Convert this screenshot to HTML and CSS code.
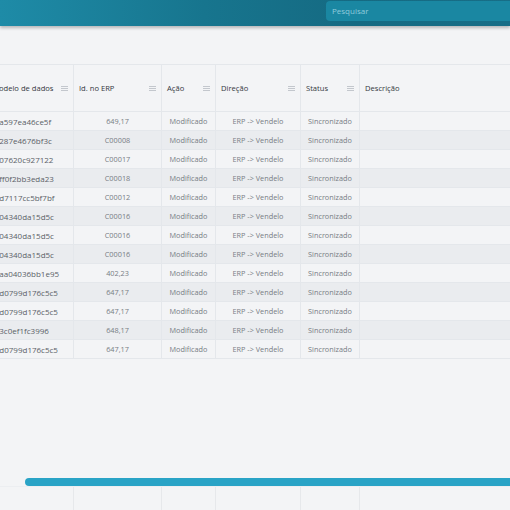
FILE: index.html
```html
<!DOCTYPE html>
<html lang="pt">
<head>
  <meta charset="UTF-8" />
  <title>Sincronizações</title>
  <link rel="stylesheet" href="styles.css">
</head>
<body>

  <header class="topbar">
    <div class="search">Pesquisar</div>
  </header>

  <div class="grid-wrap">
    <div class="grid">
      <div class="row head">
        <div class="cell c1">Id. do modelo de dados <span class="menu"></span></div>
        <div class="cell c2">Id. no ERP <span class="menu"></span></div>
        <div class="cell c3">Ação <span class="menu"></span></div>
        <div class="cell c4">Direção <span class="menu"></span></div>
        <div class="cell c5">Status <span class="menu"></span></div>
        <div class="cell c6">Descrição</div>
      </div>
      <div id="rows"></div>
      <div class="spacer"></div>
      <div class="hscroll"><div class="thumb"></div></div>
      <div class="row foot">
        <div class="cell c1"></div><div class="cell c2"></div><div class="cell c3"></div>
        <div class="cell c4"></div><div class="cell c5"></div><div class="cell c6"></div>
      </div>
    </div>
  </div>

  <script>
    const data = [
      ['64f1b2c5a597ea46ce5f', '649,17'],
      ['64f1b2c5287e4676bf3c', 'C00008'],
      ['64f1b2c507620c927122', 'C00017'],
      ['64f1b2c5ff0f2bb3eda23', 'C00018'],
      ['64f1b2c5d7117cc5bf7bf', 'C00012'],
      ['64f1b2c504340da15d5c', 'C00016'],
      ['64f1b2c504340da15d5c', 'C00016'],
      ['64f1b2c504340da15d5c', 'C00016'],
      ['64f1b2c5aa04036bb1e95', '402,23'],
      ['64f1b2c5d0799d176c5c5', '647,17'],
      ['64f1b2c5d0799d176c5c5', '647,17'],
      ['64f1b2c53c0ef1fc3996', '648,17'],
      ['64f1b2c5d0799d176c5c5', '647,17']
    ];

    const rows = document.getElementById('rows');
    data.forEach(item => {
      const row = document.createElement('div');
      row.className = 'row';
      row.innerHTML = `
        <div class="cell c1 left">${item[0]}</div>
        <div class="cell c2">${item[1]}</div>
        <div class="cell c3">Modificado</div>
        <div class="cell c4">ERP -&gt; Vendelo</div>
        <div class="cell c5">Sincronizado</div>
        <div class="cell c6"></div>
      `;
      rows.appendChild(row);
    });
  </script>
</body>
</html>
```
FILE: styles.css
```css
body {
  margin: 0;
  font-family: 'Open Sans', 'DejaVu Sans', sans-serif;
  background: #f3f4f6;
  height: 510px;
  overflow: hidden;
}

.topbar {
  height: 26px;
  background: linear-gradient(90deg, #1e8ba7 0%, #17758e 40%, #156a82 70%, #176e87 100%);
  box-shadow: 0 2px 3px rgba(0, 0, 0, 0.25);
  display: flex;
  justify-content: flex-end;
  align-items: center;
}

.search {
  width: 178px;
  height: 20px;
  margin-top: -4px;
  background: #1a87a2;
  border-radius: 4px 0 0 4px;
  color: #8fcbdc;
  font-size: 8px;
  line-height: 20px;
  padding-left: 6px;
}

.grid-wrap {
  margin-top: 38px;
  overflow: hidden;
}

/* the grid is scrolled a bit to the right, so the first column is cut */
.grid {
  margin-left: -43px;
  width: 660px;
}

.row {
  display: flex;
  height: 19px;
  border-bottom: 1px solid #e4e7eb;
  box-sizing: border-box;
}

#rows .row:nth-child(even) {
  background: #eaecef;
}

.row.head {
  height: 48px;
  border-top: 1px solid #e4e7eb;
}

.cell {
  box-sizing: border-box;
  border-right: 1px solid #e4e7eb;
  font-size: 7.3px;
  color: #777c84;
  display: flex;
  align-items: center;
  justify-content: center;
  white-space: nowrap;
  overflow: hidden;
}

.cell.left {
  justify-content: flex-start;
  padding-left: 8px;
  color: #5a5f67;
  font-size: 8px;
}

.head .cell {
  justify-content: space-between;
  padding: 0 5px;
  color: #33383e;
  font-size: 7.6px;
}

.head .c1 {
  padding-left: 13px;
}

.c1 { width: 117px; }
.c2 { width: 88px; }
.c3 { width: 54px; }
.c4 { width: 85px; }
.c5 { width: 59px; }
.c6 { flex: 1; border-right: none; }

.menu {
  width: 7px;
  height: 5px;
  background: linear-gradient(#c3c7cd 0 1px, transparent 1px 2px, #c3c7cd 2px 3px, transparent 3px 4px, #c3c7cd 4px 5px);
}

.spacer {
  height: 119px;
}

.hscroll {
  margin-left: 68px;
  height: 8px;
}

.thumb {
  height: 100%;
  background: #29a3c6;
  border-radius: 4px 0 0 4px;
}

.row.foot {
  height: 30px;
  border-top: 1px solid #eceef1;
  border-bottom: none;
}

.foot .cell {
  border-right-color: #e6e8eb;
}
```
